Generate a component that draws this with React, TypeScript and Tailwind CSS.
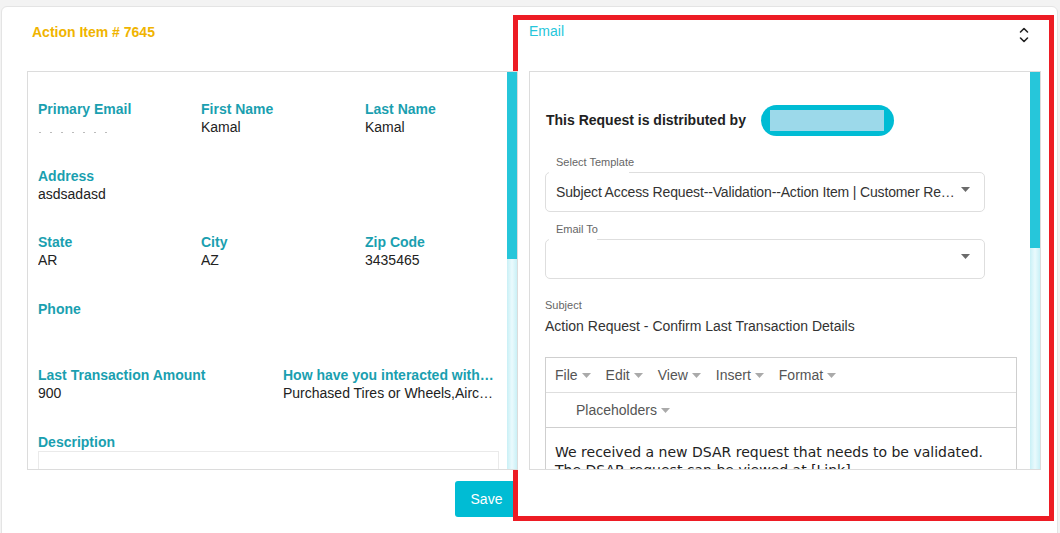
import React from "react";

const sans = "font-['Liberation_Sans',Arial,sans-serif]";

type Field = { label: string; value?: string; redacted?: boolean };

const rows: { cols: string; fields: Field[] }[] = [
  {
    cols: "grid-cols-[163px_164px_1fr]",
    fields: [
      { label: "Primary Email", redacted: true },
      { label: "First Name", value: "Kamal" },
      { label: "Last Name", value: "Kamal" },
    ],
  },
  { cols: "grid-cols-1", fields: [{ label: "Address", value: "asdsadasd" }] },
  {
    cols: "grid-cols-[163px_164px_1fr]",
    fields: [
      { label: "State", value: "AR" },
      { label: "City", value: "AZ" },
      { label: "Zip Code", value: "3435465" },
    ],
  },
  { cols: "grid-cols-1", fields: [{ label: "Phone" }] },
  {
    cols: "grid-cols-[245px_214px]",
    fields: [
      { label: "Last Transaction Amount", value: "900" },
      { label: "How have you interacted with Goodyear?", value: "Purchased Tires or Wheels,Aircraft Tires" },
    ],
  },
];

function Scrollbar({ thumb }: { thumb: string }) {
  return (
    <div className="absolute right-0 top-0 bottom-0 w-[10px] bg-gradient-to-r from-[#c9f0f6] via-[#eafafd] to-[#c9f0f6]">
      <div className={`w-full bg-[#26c6da] ${thumb}`} />
    </div>
  );
}

function FieldCell({ field }: { field: Field }) {
  return (
    <div className="min-w-0">
      <div className="truncate text-[14px] font-bold leading-[18px] text-[#1a9fb0]">{field.label}</div>
      {field.redacted ? (
        <div className="flex h-[18px] items-end gap-[9px] pb-[3px] pl-[1px]">
          {[0, 1, 2, 3, 4, 5, 6].map((i) => (
            <span key={i} className="h-[1px] w-[2px] bg-[#bbb]" />
          ))}
        </div>
      ) : (
        <div className="truncate text-[14px] leading-[18px] text-[#222]">{field.value}</div>
      )}
    </div>
  );
}

function DetailsPanel() {
  return (
    <div className="relative h-[399px] overflow-hidden border border-[#dcdcdc] bg-white">
      <div className="pl-[10px] pr-[18px] pt-[28px]">
        {rows.map((row, i) => (
          <div key={i} className={`grid h-[66.5px] ${row.cols}`}>
            {row.fields.map((f) => (
              <FieldCell key={f.label} field={f} />
            ))}
          </div>
        ))}
        <div className="text-[14px] font-bold leading-[18px] text-[#1a9fb0]">Description</div>
        <div className="h-[60px] border border-[#eaeaea]" />
      </div>
      <Scrollbar thumb="h-[187px]" />
    </div>
  );
}

function Caret({ className = "" }: { className?: string }) {
  return (
    <svg width="9" height="5" viewBox="0 0 9 5" className={className}>
      <path d="M0 0h9L4.5 5z" fill="currentColor" />
    </svg>
  );
}

function OutlinedSelect({ label, notch, value }: { label: string; notch: string; value?: string }) {
  return (
    <div>
      <div className="pl-[11px] text-[11px] leading-[14px] text-[#666]">{label}</div>
      <div className="relative mt-[3px] flex h-[40px] items-center rounded-[5px] border border-[#dedede] pl-[10px] pr-[14px]">
        <span className={`absolute -top-[1px] left-[3px] h-[2px] bg-white ${notch}`} />
        <span className="min-w-0 flex-1 truncate text-[14px] tracking-[-0.15px] text-[#333]">{value}</span>
        <Caret className="ml-[5px] -mt-[6px] text-[#6b6b6b]" />
      </div>
    </div>
  );
}

function Editor() {
  const menus = ["File", "Edit", "View", "Insert", "Format"];
  return (
    <div className="w-[472px] border border-[#cfcfcf]">
      <div className="flex h-[35px] items-center gap-[15px] border-b border-[#dedede] pl-[9px]">
        {menus.map((m) => (
          <span key={m} className="flex items-center gap-[4px] text-[14px] text-[#555]">
            {m}
            <Caret className="text-[#aaa]" />
          </span>
        ))}
      </div>
      <div className="flex h-[35px] items-center border-b border-[#cfcfcf] pl-[30px]">
        <span className="flex items-center gap-[4px] text-[14px] text-[#555]">
          Placeholders
          <Caret className="text-[#aaa]" />
        </span>
      </div>
      <div className="px-[9px] pt-[15px] font-['DejaVu_Sans',Verdana,sans-serif] text-[14px] leading-[18px] text-[#222]">
        <p>We received a new DSAR request that needs to be validated.</p>
        <p>The DSAR request can be viewed at [Link].</p>
      </div>
    </div>
  );
}

function EmailPanel() {
  return (
    <div className="relative h-[399px] overflow-hidden border border-[#dcdcdc] bg-white">
      <div className="pl-[15px] pr-[55px] pt-[32px]">
        <div className="flex items-center pl-[1px]">
          <span className="text-[14px] font-bold text-[#222]">This Request is distributed by</span>
          <span className="ml-[15px] mt-[1px] flex h-[31px] w-[133px] items-center justify-center rounded-full bg-[#00bcd4]">
            <span className="h-[21px] w-[114px] bg-[#9cd9ea]" />
          </span>
        </div>
        <div className="mt-[19px] flex flex-col gap-[10px]">
          <OutlinedSelect
            label="Select Template"
            notch="w-[80px]"
            value="Subject Access Request--Validation--Action Item | Customer Request Email"
          />
          <OutlinedSelect label="Email To" notch="w-[48px]" />
        </div>
        <div className="mt-[19px] text-[11px] leading-[14px] text-[#666]">Subject</div>
        <div className="mt-[5px] text-[14px] leading-[18px] text-[#333]">Action Request - Confirm Last Transaction Details</div>
        <div className="mt-[22px]">
          <Editor />
        </div>
      </div>
      <Scrollbar thumb="h-[176px]" />
    </div>
  );
}

function SortIcon() {
  return (
    <svg width="12" height="20" viewBox="0 0 12 20" fill="none" stroke="#222" strokeWidth="1.6" strokeLinecap="round" strokeLinejoin="round">
      <path d="M2.5 7l3.5-3.5L9.5 7" />
      <path d="M2.5 13l3.5 3.5L9.5 13" />
    </svg>
  );
}

export default function App() {
  return (
    <div className={`h-[533px] w-[1060px] overflow-hidden bg-[#f3f3f3] pl-[1px] pt-[6px] ${sans}`}>
      <div className="flex h-[540px] w-[1057px] items-start rounded-[6px] border border-[#e4e4e4] bg-white pl-[25px] pt-[8px]">
        <div className="flex w-[491px] flex-col">
          <div className="mt-[9px] h-[47px] pl-[5px] text-[14px] font-bold leading-[16px] text-[#f0b400]">Action Item # 7645</div>
          <DetailsPanel />
          <button className="mt-[11px] h-[36px] w-[63px] self-end rounded-[3px] bg-[#00bcd4] text-[14px] text-white">Save</button>
        </div>
        <div className="-ml-[5px] h-[506px] w-[541px] border-[5px] border-[#ed1c24] pl-[11px] pr-[8px] pt-[3px]">
          <div className="flex h-[48px] items-start justify-between">
            <span className="text-[14px] leading-[16px] text-[#26c6da]">Email</span>
            <span className="mr-[11px] mt-[2px]">
              <SortIcon />
            </span>
          </div>
          <EmailPanel />
        </div>
      </div>
    </div>
  );
}
